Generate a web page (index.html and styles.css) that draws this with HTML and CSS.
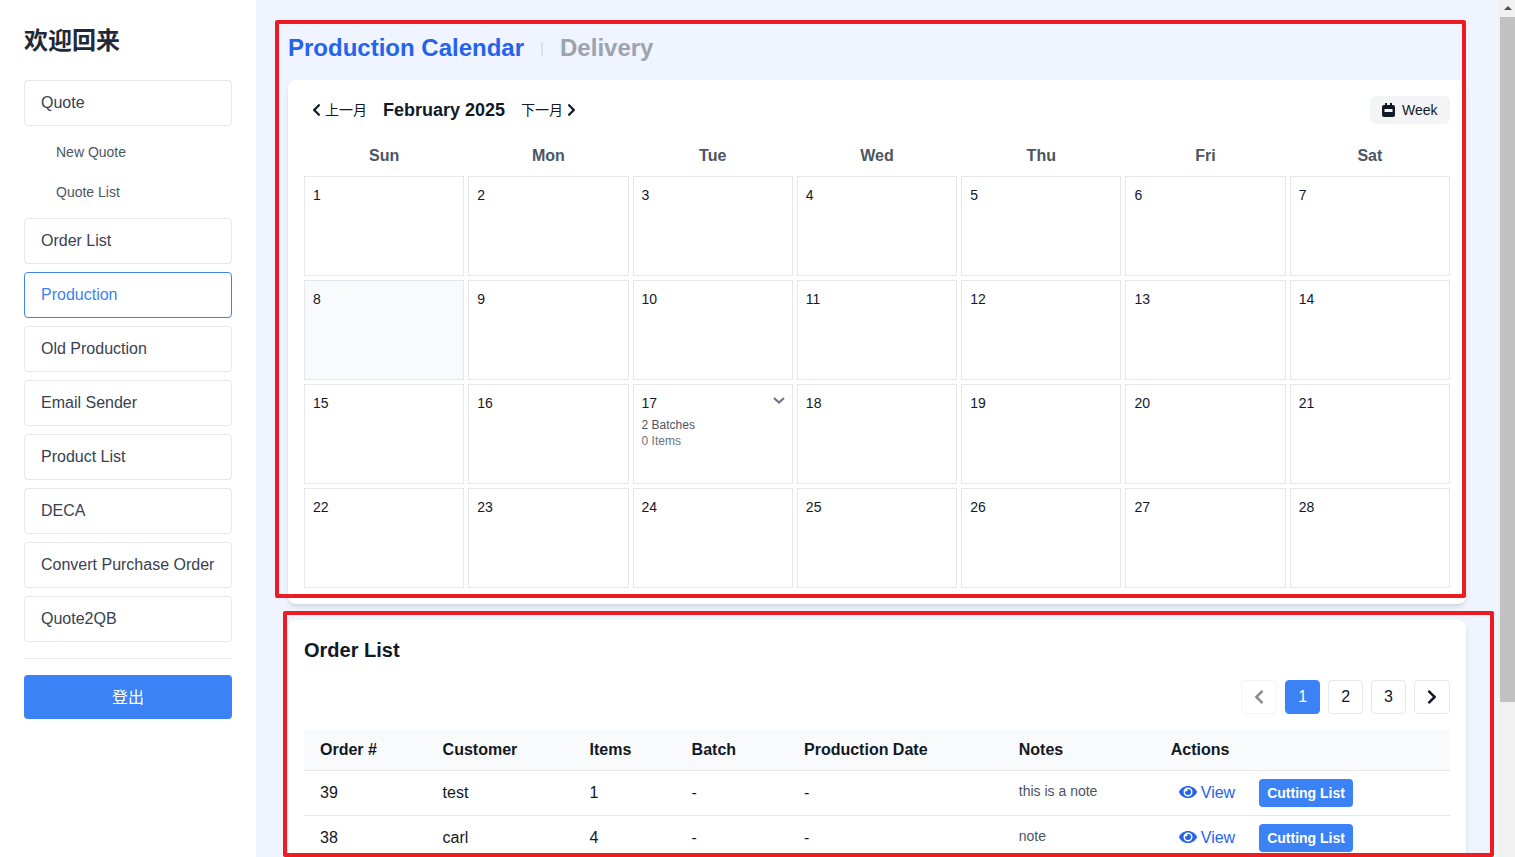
FILE: index.html
```html
<!DOCTYPE html>
<html lang="en">
  <head>
    <meta charset="UTF-8" />
    <meta name="viewport" content="width=device-width, initial-scale=1.0" />
    <title>Production Calendar</title>
    <link rel="stylesheet" href="styles.css">
  </head>
  <body>
    <div class="app">
      <aside class="sidebar">
        <h1 class="welcome">欢迎回来</h1>
        <nav class="nav">
          <a class="nav-item">Quote</a>
          <div class="sub-list">
            <a class="sub-item">New Quote</a>
            <a class="sub-item">Quote List</a>
          </div>
          <a class="nav-item">Order List</a>
          <a class="nav-item active">Production</a>
          <a class="nav-item">Old Production</a>
          <a class="nav-item">Email Sender</a>
          <a class="nav-item">Product List</a>
          <a class="nav-item">DECA</a>
          <a class="nav-item">Convert Purchase Order</a>
          <a class="nav-item">Quote2QB</a>
        </nav>
        <hr class="divider" />
        <button class="logout"><span class="cjk-up">登出</span></button>
      </aside>

      <main class="main">
        <div class="tabs">
          <span class="tab current">Production Calendar</span>
          <span class="tab-sep"></span>
          <span class="tab">Delivery</span>
        </div>

        <section class="card">
          <div class="toolbar">
            <div class="month-nav">
              <button class="month-btn">
                <svg class="chev" viewBox="0 0 320 512"><path d="M34.52 239.03L228.87 44.69c9.37-9.37 24.57-9.37 33.94 0l22.67 22.67c9.36 9.36 9.37 24.52.04 33.9L131.49 256l154.02 154.75c9.34 9.38 9.32 24.54-.04 33.9l-22.67 22.67c-9.37 9.37-24.57 9.37-33.94 0L34.52 272.97c-9.37-9.37-9.37-24.57 0-33.94z"/></svg>
                <span class="cjk-up">上一月</span>
              </button>
              <span class="month-title">February 2025</span>
              <button class="month-btn">
                <span class="cjk-up">下一月</span>
                <svg class="chev" viewBox="0 0 320 512"><path d="M285.476 272.971L91.132 467.314c-9.373 9.373-24.569 9.373-33.941 0l-22.667-22.667c-9.357-9.357-9.375-24.522-.04-33.901L188.505 256 34.484 101.255c-9.335-9.379-9.317-24.544.04-33.901l22.667-22.667c9.373-9.373 24.569-9.373 33.941 0L285.475 239.03c9.373 9.372 9.373 24.568.001 33.941z"/></svg>
              </button>
            </div>
            <button class="week-btn">
              <svg class="cal-icon" viewBox="0 0 13 14">
                <path d="M3 0h2v2h3V0h2v2h1a2 2 0 0 1 2 2v8a2 2 0 0 1-2 2H2a2 2 0 0 1-2-2V4a2 2 0 0 1 2-2h1z"/>
                <rect class="cal-slit" x="2.5" y="6" width="8" height="3"/>
              </svg>
              Week
            </button>
          </div>

          <div class="calendar">
            <div class="weekday">Sun</div>
            <div class="weekday">Mon</div>
            <div class="weekday">Tue</div>
            <div class="weekday">Wed</div>
            <div class="weekday">Thu</div>
            <div class="weekday">Fri</div>
            <div class="weekday">Sat</div>

            <div class="day">1</div>
            <div class="day">2</div>
            <div class="day">3</div>
            <div class="day">4</div>
            <div class="day">5</div>
            <div class="day">6</div>
            <div class="day">7</div>
            <div class="day muted">8</div>
            <div class="day">9</div>
            <div class="day">10</div>
            <div class="day">11</div>
            <div class="day">12</div>
            <div class="day">13</div>
            <div class="day">14</div>
            <div class="day">15</div>
            <div class="day">16</div>
            <div class="day">
              17
              <svg class="day-toggle" viewBox="0 0 12 7"><polyline points="1,1 6,5.6 11,1"/></svg>
              <div class="batches">2 Batches</div>
              <div class="items">0 Items</div>
            </div>
            <div class="day">18</div>
            <div class="day">19</div>
            <div class="day">20</div>
            <div class="day">21</div>
            <div class="day">22</div>
            <div class="day">23</div>
            <div class="day">24</div>
            <div class="day">25</div>
            <div class="day">26</div>
            <div class="day">27</div>
            <div class="day">28</div>
          </div>
        </section>

        <section class="card orders">
          <h2 class="card-title">Order List</h2>
          <div class="pager">
            <button class="page-btn disabled">
              <svg class="page-chev" viewBox="0 0 320 512"><path d="M34.52 239.03L228.87 44.69c9.37-9.37 24.57-9.37 33.94 0l22.67 22.67c9.36 9.36 9.37 24.52.04 33.9L131.49 256l154.02 154.75c9.34 9.38 9.32 24.54-.04 33.9l-22.67 22.67c-9.37 9.37-24.57 9.37-33.94 0L34.52 272.97c-9.37-9.37-9.37-24.57 0-33.94z"/></svg>
            </button>
            <button class="page-btn current">1</button>
            <button class="page-btn">2</button>
            <button class="page-btn">3</button>
            <button class="page-btn">
              <svg class="page-chev" viewBox="0 0 320 512"><path d="M285.476 272.971L91.132 467.314c-9.373 9.373-24.569 9.373-33.941 0l-22.667-22.667c-9.357-9.357-9.375-24.522-.04-33.901L188.505 256 34.484 101.255c-9.335-9.379-9.317-24.544.04-33.901l22.667-22.667c9.373-9.373 24.569-9.373 33.941 0L285.475 239.03c9.373 9.372 9.373 24.568.001 33.941z"/></svg>
            </button>
          </div>

          <table class="order-table">
            <colgroup>
              <col class="c-order" />
              <col class="c-customer" />
              <col class="c-items" />
              <col class="c-batch" />
              <col class="c-date" />
              <col class="c-notes" />
              <col />
            </colgroup>
            <thead>
              <tr>
                <th>Order #</th>
                <th>Customer</th>
                <th>Items</th>
                <th>Batch</th>
                <th>Production Date</th>
                <th>Notes</th>
                <th>Actions</th>
              </tr>
            </thead>
            <tbody>
              <tr>
                <td>39</td>
                <td>test</td>
                <td>1</td>
                <td>-</td>
                <td>-</td>
                <td class="note">this is a note</td>
                <td>
                  <div class="actions">
                    <a class="view">
                      <svg class="eye" viewBox="0 0 576 512"><path d="M572.52 241.4C518.29 135.59 410.93 64 288 64S57.68 135.64 3.48 241.41a32.35 32.35 0 0 0 0 29.19C57.71 376.41 165.07 448 288 448s230.32-71.64 284.52-177.41a32.35 32.35 0 0 0 0-29.19zM288 400a144 144 0 1 1 144-144 143.93 143.93 0 0 1-144 144zm0-240a95.31 95.31 0 0 0-25.31 3.79 47.85 47.85 0 0 1-66.9 66.9A95.78 95.78 0 1 0 288 160z"/></svg>
                      View
                    </a>
                    <button class="cut-btn">Cutting List</button>
                  </div>
                </td>
              </tr>
              <tr>
                <td>38</td>
                <td>carl</td>
                <td>4</td>
                <td>-</td>
                <td>-</td>
                <td class="note">note</td>
                <td>
                  <div class="actions">
                    <a class="view">
                      <svg class="eye" viewBox="0 0 576 512"><path d="M572.52 241.4C518.29 135.59 410.93 64 288 64S57.68 135.64 3.48 241.41a32.35 32.35 0 0 0 0 29.19C57.71 376.41 165.07 448 288 448s230.32-71.64 284.52-177.41a32.35 32.35 0 0 0 0-29.19zM288 400a144 144 0 1 1 144-144 143.93 143.93 0 0 1-144 144zm0-240a95.31 95.31 0 0 0-25.31 3.79 47.85 47.85 0 0 1-66.9 66.9A95.78 95.78 0 1 0 288 160z"/></svg>
                      View
                    </a>
                    <button class="cut-btn">Cutting List</button>
                  </div>
                </td>
              </tr>
            </tbody>
          </table>
        </section>
      </main>

      <div class="scrollbar">
        <span class="scroll-up"></span>
        <div class="scroll-thumb"></div>
      </div>
    </div>

    <!-- red review marks drawn on top of the page -->
    <div class="mark mark-calendar"></div>
    <div class="mark mark-orders"></div>
  </body>
</html>
```

FILE: styles.css
```css
* {
  box-sizing: border-box;
}
html,
body {
  margin: 0;
  height: 857px;
  overflow: hidden;
}
body {
  font-family: "Liberation Sans", "Noto Sans CJK SC", Arial, sans-serif;
  font-size: 16px;
  color: #111827;
  position: relative;
}
button {
  font-family: inherit;
  cursor: pointer;
}
.app {
  display: flex;
  height: 857px;
}
.cjk-up {
  display: block;
  margin-top: -2px;
}

/* sidebar */
.sidebar {
  width: 256px;
  flex: none;
  background: #fff;
  padding: 24px;
}
.welcome {
  margin: 0 0 22px;
  font-size: 24px;
  line-height: 34px;
  font-weight: 700;
  color: #1f2937;
}
.nav {
  display: flex;
  flex-direction: column;
  gap: 8px;
}
.nav-item {
  display: block;
  height: 46px;
  padding: 0 16px;
  line-height: 44px;
  border: 1px solid #e5e7eb;
  border-radius: 4px;
  color: #374151;
}
.nav-item.active {
  border-color: #3b82f6;
  color: #3b82f6;
}
.sub-list {
  display: flex;
  flex-direction: column;
  gap: 4px;
}
.sub-item {
  display: block;
  height: 36px;
  line-height: 36px;
  padding-left: 32px;
  font-size: 14px;
  color: #4b5563;
}
.divider {
  margin: 16px 0;
  border: none;
  border-top: 1px solid #e5e7eb;
}
.logout {
  display: block;
  width: 100%;
  height: 44px;
  border: none;
  border-radius: 4px;
  background: #3b82f6;
  color: #fff;
  font-size: 16px;
}

/* main area */
.main {
  flex: 1;
  min-width: 0;
  background: #eff4ff;
  padding: 32px 32px 0;
  overflow: hidden;
}
.tabs {
  display: flex;
  align-items: center;
  height: 32px;
  margin-bottom: 16px;
}
.tab {
  font-size: 24px;
  line-height: 32px;
  font-weight: 700;
  color: #9ca3af;
}
.tab.current {
  color: #2563eb;
}
.tab-sep {
  width: 2px;
  height: 14px;
  margin: 2px 17px 0;
  background: #dde1e8;
}
.card {
  background: #fff;
  border-radius: 8px;
  padding: 16px;
  box-shadow: 0 4px 6px -1px rgba(0, 0, 0, 0.1), 0 2px 4px -2px rgba(0, 0, 0, 0.1);
}
.orders {
  margin-top: 16px;
}

/* calendar */
.toolbar {
  display: flex;
  justify-content: space-between;
  align-items: center;
  height: 28px;
  margin-bottom: 16px;
}
.month-nav {
  display: flex;
  align-items: center;
  padding-left: 8px;
}
.month-btn {
  display: flex;
  align-items: center;
  gap: 4px;
  padding: 0;
  border: none;
  background: none;
  font-size: 14px;
  color: #111827;
}
.chev {
  width: 9px;
  height: 14px;
  fill: #111827;
}
.month-title {
  margin: 0 16px;
  font-size: 18px;
  font-weight: 700;
}
.week-btn {
  display: flex;
  align-items: center;
  gap: 7px;
  width: 80px;
  height: 28px;
  padding: 0 12px;
  border: none;
  border-radius: 6px;
  background: #f3f4f6;
  font-size: 14px;
  color: #111827;
}
.cal-icon {
  width: 13px;
  height: 14px;
  fill: #111827;
}
.cal-slit {
  fill: #f3f4f6;
}
.calendar {
  display: grid;
  grid-template-columns: repeat(7, 1fr);
  grid-template-rows: 32px repeat(4, 100px);
  gap: 4px;
}
.weekday {
  text-align: center;
  font-weight: 700;
  line-height: 32px;
  color: #4b5563;
}
.day {
  position: relative;
  padding: 8px;
  border: 1px solid #e5e7eb;
  font-size: 14px;
  line-height: 20px;
}
.day.muted {
  background: #f9fafb;
}
.day-toggle {
  position: absolute;
  top: 12px;
  right: 7px;
  width: 12px;
  height: 7px;
  fill: none;
  stroke: #6b7280;
  stroke-width: 2;
}
.batches,
.items {
  font-size: 12px;
  line-height: 16px;
  color: #4b5563;
}
.batches {
  margin-top: 4px;
}
.items {
  color: #6b7280;
}

/* order list */
.card-title {
  margin: 0 0 16px;
  font-size: 20px;
  line-height: 28px;
  font-weight: 700;
  color: #111827;
}
.pager {
  display: flex;
  justify-content: flex-end;
  gap: 8px;
  margin-bottom: 16px;
}
.page-btn {
  display: flex;
  align-items: center;
  justify-content: center;
  height: 34px;
  padding: 0 12px;
  background: #fff;
  border: 1px solid #e5e7eb;
  border-radius: 4px;
  font-size: 16px;
  color: #111827;
}
.page-btn.current {
  background: #3b82f6;
  border-color: #3b82f6;
  color: #fff;
}
.page-btn.disabled {
  border-color: #f3f4f6;
}
.page-chev {
  width: 10px;
  height: 16px;
  fill: #111827;
}
.disabled .page-chev {
  fill: #8b8b8b;
}
.order-table {
  width: 100%;
  border-collapse: collapse;
  table-layout: fixed;
}
.c-order {
  width: 122.6px;
}
.c-customer {
  width: 147px;
}
.c-items {
  width: 102px;
}
.c-batch {
  width: 112.4px;
}
.c-date {
  width: 214.8px;
}
.c-notes {
  width: 152px;
}
th {
  height: 40px;
  padding: 0 16px;
  text-align: left;
  font-weight: 700;
  background: #f9fafb;
  border-bottom: 1px solid #e5e7eb;
}
td {
  height: 45px;
  padding: 0 16px;
  border-bottom: 1px solid #e5e7eb;
}
td.note {
  padding-bottom: 3px;
  font-size: 14px;
  color: #4b5563;
}
.actions {
  display: flex;
  align-items: center;
  gap: 24px;
  padding-left: 8px;
}
.view {
  display: flex;
  align-items: center;
  gap: 4px;
  color: #2563eb;
}
.eye {
  width: 18px;
  height: 16px;
  margin-top: -2px;
  fill: #2563eb;
}
.cut-btn {
  height: 28px;
  padding: 0 8px;
  border: none;
  border-radius: 4px;
  background: #3b82f6;
  color: #fff;
  font-size: 14px;
  font-weight: 700;
}

/* fake browser scrollbar */
.scrollbar {
  width: 17px;
  flex: none;
  background: #f1f1f1;
  padding-left: 2px;
}
.scroll-up {
  display: block;
  width: 0;
  height: 0;
  margin: 6px auto 0;
  border-left: 4px solid transparent;
  border-right: 4px solid transparent;
  border-bottom: 4px solid #505050;
}
.scroll-thumb {
  height: 685px;
  margin-top: 7px;
  background: #c1c1c1;
}

/* review marks */
.mark {
  position: absolute;
  border: 4px solid #ed1c24;
  border-radius: 2px;
  pointer-events: none;
}
.mark-calendar {
  left: 275px;
  top: 20px;
  width: 1191px;
  height: 578px;
}
.mark-orders {
  left: 283px;
  top: 611px;
  width: 1211px;
  height: 246px;
}
```
